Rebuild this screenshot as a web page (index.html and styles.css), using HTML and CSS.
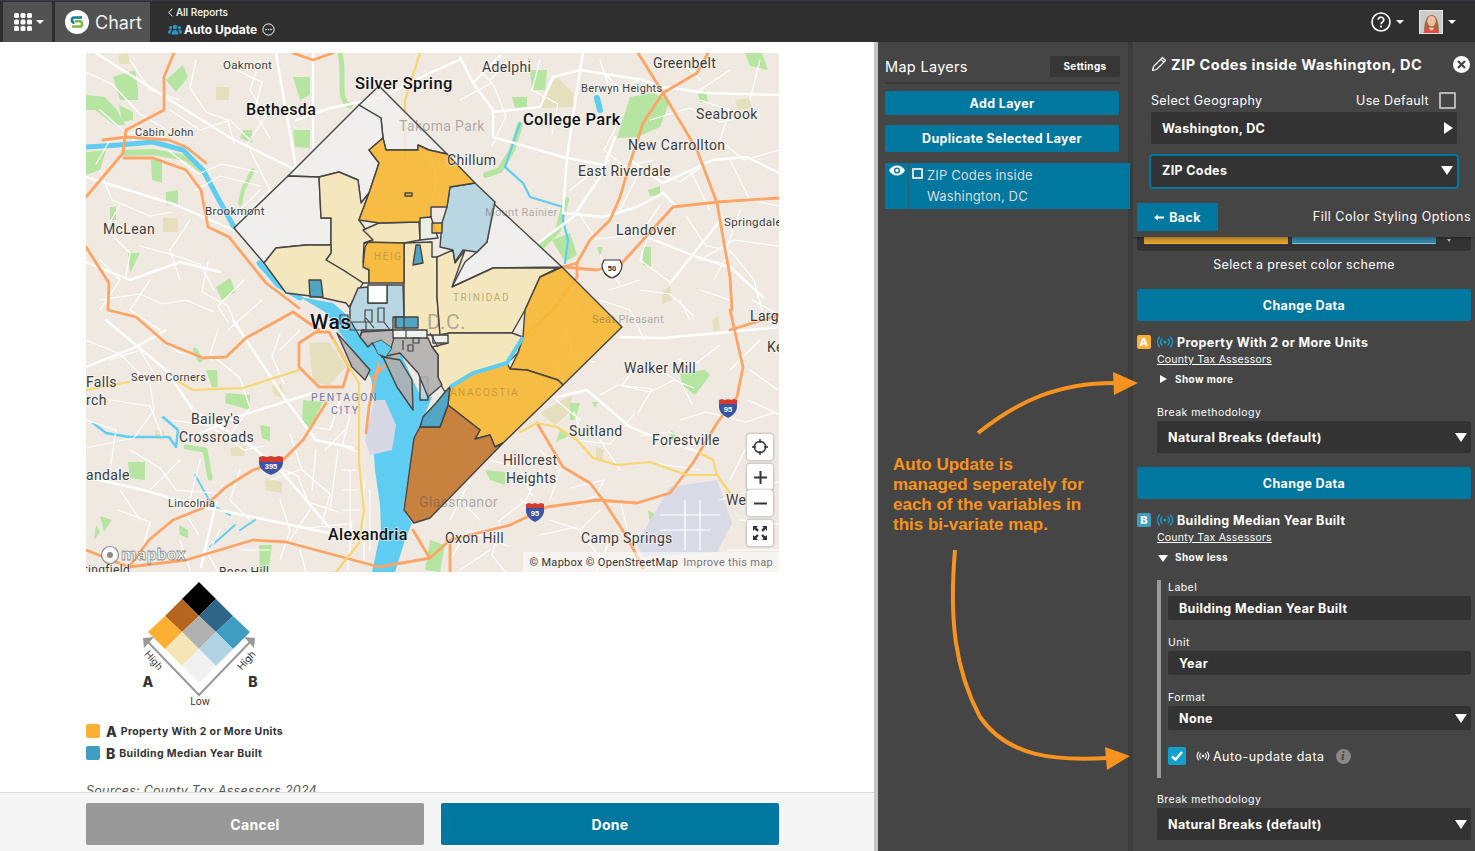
FILE: index.html
```html
<!DOCTYPE html>
<html lang="en">
<head>
    <meta charset="UTF-8">
    <meta name="viewport" content="width=device-width, initial-scale=1.0">
    <title>Chart - Auto Update</title>
    <link rel="stylesheet" href="styles.css">
</head>
<body>
    <svg class="defs" width="0" height="0">
        <symbol id="signal" viewBox="0 0 18 12">
            <circle cx="9" cy="6" r="1.6" fill="currentColor"/>
            <path d="M6 3a4 4 0 0 0 0 6M12 3a4 4 0 0 1 0 6M3.4 1a8 8 0 0 0 0 10M14.6 1a8 8 0 0 1 0 10" fill="none" stroke="currentColor" stroke-width="1.4" stroke-linecap="round"/>
        </symbol>
    </svg>

    <!-- top bar -->
    <header class="topbar">
        <div class="app-btn">
            <svg width="20" height="20" viewBox="0 0 20 20" fill="#fff">
                <rect x="1" y="1" width="5" height="5" rx="1.6"/><rect x="7.5" y="1" width="5" height="5" rx="1.6"/><rect x="14" y="1" width="5" height="5" rx="1.6"/>
                <rect x="1" y="7.5" width="5" height="5" rx="1.6"/><rect x="7.5" y="7.5" width="5" height="5" rx="1.6"/><rect x="14" y="7.5" width="5" height="5" rx="1.6"/>
                <rect x="1" y="14" width="5" height="5" rx="1.6"/><rect x="7.5" y="14" width="5" height="5" rx="1.6"/><rect x="14" y="14" width="5" height="5" rx="1.6"/>
            </svg>
            <span class="caret"></span>
        </div>
        <div class="chart-btn">
            <svg width="24" height="24" viewBox="0 0 24 24">
                <circle cx="12" cy="12" r="12" fill="#fff"/>
                <path d="M17 7.5H9.5a2.6 2.6 0 0 0 0 5.2" fill="none" stroke="#0f7f93" stroke-width="2.6"/>
                <path d="M7 16.5h7.5a2.6 2.6 0 0 0 0-5.2H10" fill="none" stroke="#7cb942" stroke-width="2.6"/>
            </svg>
            <span>Chart</span>
        </div>
        <div class="report-title">
            <div class="back-link">
                <svg width="5" height="9" viewBox="0 0 5 9"><path d="M4.3.7.8 4.5l3.5 3.8" fill="none" stroke="#fff" stroke-width="1"/></svg>
                All Reports
            </div>
            <div class="report-name">
                <svg width="14" height="11" viewBox="0 0 14 11" fill="#2b97c4">
                    <circle cx="7" cy="3" r="2.2"/><circle cx="2.6" cy="3.6" r="1.6"/><circle cx="11.4" cy="3.6" r="1.6"/>
                    <path d="M3.6 10.5c0-3 1.4-4.6 3.4-4.6s3.4 1.6 3.4 4.6zM0 9.5c0-2.4.9-4 2.6-4 .5 0 .9.1 1.2.4-.8.9-1.2 2-1.3 3.6zM14 9.5c0-2.4-.9-4-2.6-4-.5 0-.9.1-1.2.4.8.9 1.2 2 1.3 3.6z"/>
                </svg>
                <b>Auto Update</b>
                <svg width="13" height="13" viewBox="0 0 13 13"><circle cx="6.5" cy="6.5" r="5.6" fill="none" stroke="#fff" stroke-width="1"/><circle cx="4" cy="6.5" r=".8" fill="#fff"/><circle cx="6.5" cy="6.5" r=".8" fill="#fff"/><circle cx="9" cy="6.5" r=".8" fill="#fff"/></svg>
            </div>
        </div>
        <div class="top-right">
            <svg width="20" height="20" viewBox="0 0 20 20">
                <circle cx="10" cy="10" r="9" fill="none" stroke="#fff" stroke-width="1.6"/>
                <path d="M7.2 7.8a2.8 2.6 0 1 1 4.4 2.1c-1 .7-1.6 1.1-1.6 2.3" fill="none" stroke="#fff" stroke-width="1.7"/>
                <circle cx="10" cy="14.6" r="1.1" fill="#fff"/>
            </svg>
            <span class="caret small"></span>
            <svg class="avatar" width="24" height="24" viewBox="0 0 24 24">
                <rect width="24" height="24" fill="#c9ccc8"/>
                <path d="M5 24c0-8 1-18 7-19s8 8 8 19z" fill="#a5683c"/>
                <ellipse cx="12.5" cy="11" rx="4.2" ry="5.2" fill="#eebfa5"/>
                <path d="M4 24c1-4 4-6 8-6s7 2 9 6z" fill="#e5484d"/>
                <path d="M9.5 17.5h6l-2 3h-2z" fill="#eebfa5"/>
                <rect x=".5" y=".5" width="23" height="23" fill="none" stroke="#e6e6e6"/>
            </svg>
            <span class="caret small"></span>
        </div>
    </header>

    <main class="workspace">
        <!-- left: map preview -->
        <section class="preview">
            <div class="preview-scroll">
                <div class="map">
                    <svg class="map-art" viewBox="86 53 693 519" width="693" height="519">
                        <rect x="86" y="53" width="693" height="519" fill="#efe9e2"/>
                        <!-- tan areas -->
                        <g fill="#e6dfbd">
                            <polygon points="216,87 229,87 229,100 216,100"/>
                            <polygon points="163,218 178,218 178,232 163,232"/>
                            <polygon points="540,100 557,77 573,93 573,107 540,108"/>
                            <polygon points="540,413 572,395 570,412 555,425"/>
                            <polygon points="309,343 329,342 346,367 329,385 313,382"/>
                            <polygon points="265,478 282,482 282,493 266,490"/>
                            <polygon points="272,386 282,384 284,398 274,396"/>
                            <polygon points="230,448 246,446 244,456 232,456"/>
                            <polygon points="118,55 128,53 130,64 120,64"/>
                            <polygon points="662,292 670,286 672,300 662,304"/>
                            <polygon points="155,430 165,432 162,440 155,438"/>
                            <polygon points="712,320 718,316 720,330 714,332"/>
                            <polygon points="665,225 672,222 674,232 667,234"/>
                            <polygon points="735,100 750,98 752,108 738,110"/>
                            <polygon points="596,447 604,450 602,460 596,458"/>
                        </g>
                        <!-- parks -->
                        <g fill="#b6e5a2">
                            <polygon points="113,77 135,70 138,90 138,100 120,100"/>
                            <polygon points="166,80 183,65 188,77 176,92"/>
                            <polygon points="86,95 105,97 117,110 125,125 115,125 95,110 86,110"/>
                            <polygon points="119,105 133,112 133,120 122,122"/>
                            <polygon points="86,152 106,150 100,170 86,175"/>
                            <polygon points="293,77 310,77 310,95 300,100"/>
                            <polygon points="293,130 310,130 310,148 295,147"/>
                            <polygon points="151,160 162,160 162,183 152,180"/>
                            <polygon points="166,192 178,190 178,206 166,205"/>
                            <polygon points="110,207 116,207 116,220 110,220"/>
                            <polygon points="128,253 140,253 130,273"/>
                            <polygon points="216,287 230,278 236,292 222,300"/>
                            <polygon points="243,130 252,130 252,143 240,138"/>
                            <polygon points="617,138 630,97 653,93 670,100 660,127 637,137"/>
                            <polygon points="512,97 527,97 527,107 515,108"/>
                            <polygon points="530,70 547,70 545,90 532,90"/>
                            <polygon points="552,240 570,233 577,255 565,262"/>
                            <polygon points="643,247 651,247 651,267 643,265"/>
                            <polygon points="597,247 603,247 600,257"/>
                            <polygon points="680,373 705,370 710,375 695,395 682,385"/>
                            <polygon points="570,403 580,403 575,420 570,420"/>
                            <polygon points="592,402 598,402 595,408"/>
                            <polygon points="485,470 505,472 505,485 490,480"/>
                            <polygon points="206,370 217,370 218,387 212,387"/>
                            <polygon points="226,393 250,395 250,410 225,403"/>
                            <polygon points="303,400 323,402 310,430 302,420"/>
                            <polygon points="260,425 270,427 270,441 262,438"/>
                            <polygon points="128,462 145,462 145,480 130,478"/>
                            <polygon points="179,525 188,530 188,538 180,535"/>
                            <polygon points="259,545 272,545 268,572 260,572"/>
                            <polygon points="745,53 762,53 768,70 750,66"/>
                            <polygon points="100,516 112,520 104,532"/>
                            <polygon points="96,525 100,532 94,540"/>
                            <polygon points="430,540 445,545 440,572 425,570"/>
                            <polygon points="648,510 656,515 650,522"/>
                            <polygon points="560,430 568,436 556,442"/>
                            <polygon points="648,190 660,186 660,196 650,196"/>
                            <polygon points="698,94 706,90 708,102 700,102"/>
                            <polygon points="670,430 680,436 672,440"/>
                        </g>
                        <g fill="none" stroke="#b6e5a2" stroke-linecap="round" stroke-linejoin="round">
                            <path d="M340 53 C346 80 336 98 350 106" stroke-width="5"/>
                            <path d="M253 170 L243 190 L240 204" stroke-width="4"/>
                            <path d="M124 153 L153 152 L186 158 L204 172" stroke-width="6"/>
                            <path d="M186 447 L205 450 L210 478" stroke-width="5"/>
                            <path d="M520 125 L512 150 L500 170 L486 175 M566 200 L558 230 L542 246" stroke-width="6"/>
                            <path d="M195 350 L200 360" stroke-width="5"/>
                        </g>
                        <!-- water -->
                        <g fill="none" stroke="#5fcdf1" stroke-linecap="round" stroke-linejoin="round">
                            <path d="M86 147 L119 145 L153 142 L183 150 L203 170 L219 200 L234 227" stroke-width="5"/>
                            <path d="M259 263 L278 285 L300 298" stroke-width="5"/>
                            <path d="M93 423 L106 433 L129 437 L169 437 L176 447 L178 430 L163 417" stroke-width="2.4"/>
                            <path d="M520 123 L505 167 L523 183 L530 197 L563 207 L563 220 L568 240 L565 263" stroke-width="2.2"/>
                            <path d="M597 98 L600 110" stroke-width="6"/>
                            <path d="M195 475 L212 505 L230 515 M235 525 L210 547 M240 530 L255 520" stroke-width="1.8"/>
                        </g>
                        <polygon points="300,297 333,303 350,318 360,338 400,352 420,395 432,397 420,427 414,438 403,510 412,523 405,540 395,572 372,572 381,530 380,505 375,470 373,440 375,402 371,378 345,340 325,312" fill="#5fcdf1"/>
                        <polygon points="374,400 385,400 396,425 392,450 370,455 365,440" fill="#d6d8e6"/>
                        <polygon points="637,543 670,487 717,480 732,523 717,552 643,557" fill="#d8dae6"/>
                        <!-- streets -->
                        <g fill="none" stroke="#fff" stroke-width="1.2" stroke-linejoin="round" stroke-linecap="round">
                            <path d="M86 72l26 12 28 30 34 20M196 60l-6 28 16 24 22 8 6 24M236 70l26 12-8 30 16 26M168 150l30 24 24-10 36 8M100 170l12 30 38 16 22-4M120 205l-14 24 24 24-4 24M140 246l30 8 30 10 14 26M208 262l-6 30 26 14 8 20M244 280l-26 26 10 16M100 300l40-6 22 10 24-4 28 12M86 340l34 14 30 30 4 26-20 28-48 10M150 330l28 22 34 8M218 330l-8 24 30 24 10 30-18 24M280 334l-8 22 12 28M172 420l38 6 34 24 20-4M130 450l30 18 16 22 50 4M200 460l-6 24-8 30 12 20M250 444l20 20 28 12 10 26 30 10M290 434l12 36 28 24-8 30M316 450l-4 40M330 406l20 10-8 30 16 6M270 520l36 8 42-4M118 510l32 12-8 30M220 530l-12 24 10 18M300 550l6 22"/>
                            <path d="M342 470h14M342 490h16M342 510h18M342 530h16M338 450l-8 60M352 520l-4 50M350 470v80M364 480v80M370 490v60"/>
                            <path d="M480 70l14 16 12 30-14 30M540 60l-8 30 26 14-6 30M606 75l20 20M620 120l-16 30 20 16 30-6M610 160l-40 30M580 215l16 24 40-4M650 230l-10 30 30 22M686 216l20 30 24 4-16 30M700 260l34-20 44 6M730 250l24 30 8 30M650 172l30 10 28-20M650 120l40-12 30 14 40-8M700 100l30 10-10 30 24 20 35-10M586 292l-20 36 6 26 22 8M600 300l30 10 14 30M640 290l30 4 24 22M570 330l-18 30 12 22M640 360l-18 26 28 6 24-12 20 8M600 395l18-10 34 4-14 24M660 370l22 14 10 20M720 345l-26 20-16-6M544 390l36 30M574 412l8 24M634 414l-24 30-34-4M640 436l30-4 24 10M540 470l-14 30-28 22M490 460l30 8 12 28M570 488l34-8-8 16-24 8M500 525l-8 30 14 18M450 560l18-30 40 16M540 535l36-8 24 30M610 540l-14 32M680 420l26-8 40 10 30-10M748 400l30 14M752 300l26 14M720 500l58-18M740 520l38 4M728 550l50 0"/>
                            <path d="M130 60l20 30 30 10M170 110l30 20 30-10 20 20M260 60l-10 30 16 26-20 30M250 150l20 40-30 30M140 130l-30 10-14 24M100 110l34 30M196 190l24-14 40 10M190 220l-20 30 10 30M100 260l20 20-20 30M150 280l-20 30 30 20M260 190l-20 20M262 300l-34 30M300 330l-20 20M110 360l30-10 20 34M110 400l40 6 12 30M86 420l30 10-6 40M180 460l-30 30M120 490l20 30M240 470l-10 30 20 20M280 500l10 30-10 30M180 540l10 30M240 550l30 0M300 470l-30 10M310 510l-20 30M340 400l-10 30-20-4M345 430l-20 20"/>
                            <path d="M460 100l30-16M510 60l-20 20M600 60l10 30 30-10M680 60l20 20M730 70l-30 20M760 60l-10 40M640 170l-20 40M660 205l-20 30M690 170l20 40M730 160l20 40 28 6M740 210l-14 40M600 255l20 30M610 290l30-10M700 290l30 10M690 320l-10-20M760 340l-30 30M750 370l28 20M750 440l-20 40M700 470l-40-6M620 470l-20-30M540 450l20 20-10 30M600 510l-20 20-30-10M620 500l10 40M470 480l-20 40M460 500l20 20M520 500l20 10M490 550l-30 20M700 500v50M685 500v50M660 530h50M660 515h60"/>
                        </g>
                        <g fill="none" stroke="#fff" stroke-width="2.4" stroke-linejoin="round" stroke-linecap="round">
                            <path d="M96 53 L159 93 L229 137 L296 170"/>
                            <path d="M86 177 L176 205 L233 230"/>
                            <path d="M276 53 L284 100 L296 167"/>
                            <path d="M313 53 L313 147"/>
                            <path d="M296 120 L330 108 L380 98 L430 73 L459 60"/>
                            <path d="M493 112 L540 107 L553 77 L580 70 L643 80 L663 87 L707 93 L779 95"/>
                            <path d="M493 112 L493 137 L563 157 L603 165"/>
                            <path d="M460 57 L473 83 L493 110"/>
                            <path d="M583 53 L580 70 L567 157 L563 213"/>
                            <path d="M615 137 L600 177 L573 217 L533 247"/>
                            <path d="M563 213 L603 217 L637 207 L663 193 L677 207"/>
                            <path d="M630 160 L663 183 L713 160 L747 157 L779 173"/>
                            <path d="M647 237 L697 257 L730 267 L763 297"/>
                            <path d="M670 283 L723 217"/>
                            <path d="M557 397 L587 390 L630 427 L670 443 L703 453"/>
                            <path d="M620 337 L663 338 L730 332 L779 327"/>
                            <path d="M233 320 L286 400 L316 440 L353 448"/>
                            <path d="M186 440 L236 417 L313 393"/>
                            <path d="M86 477 L143 490 L203 507 L253 517 L329 533"/>
                            <path d="M106 320 L166 370 L193 410 L253 447 L283 473 L329 527"/>
                            <path d="M86 367 L136 347 L166 330"/>
                            <path d="M216 503 L208 537 L201 567"/>
                            <path d="M473 83 L500 56"/>
                            <path d="M429 150 L437 180 L430 210"/>
                            <path d="M86 262 L130 280 L180 262 L220 272"/>
                        </g>
                        <!-- highways -->
                        <g fill="none" stroke="#fca566" stroke-width="2.8" stroke-linejoin="round" stroke-linecap="round">
                            <path d="M174 53 L164 77 L164 110 L126 130 L123 153 L86 197"/>
                            <path d="M103 140 L126 137 L169 140 L186 147 L206 163"/>
                            <path d="M124 158 L153 158 L186 170 L201 190 L208 227 L229 237 L266 283 L299 308"/>
                            <path d="M293 53 L313 60 L333 53"/>
                            <path d="M86 247 L109 283 L108 310 L136 317 L166 343 L203 358 L226 357 L246 338 L293 312 L319 330"/>
                            <path d="M316 332 L299 343 L299 367 L319 387 L343 387 L349 367 L329 332 Z"/>
                            <path d="M326 403 L303 440 L283 460 L253 470 L226 487 L203 508 L173 520 L149 540 L129 567"/>
                            <path d="M86 550 L129 567 L186 560 L253 540 L286 542 L353 560 L379 567 L419 560 L430 558 L450 540 L510 525 L527 517 L547 507 L597 500 L637 503 L670 493 L693 463 L717 423 L737 397 L743 367 L730 310"/>
                            <path d="M638 53 L663 93 L697 150 L717 203 L730 277 L732 310"/>
                            <path d="M708 53 L697 73 L663 93 L643 123 L630 163 L620 197 L610 220 L590 240 L577 263 L563 267"/>
                            <path d="M577 263 L577 277 L553 310 L523 337"/>
                            <path d="M563 267 L597 270 L622 263 L643 240 L673 207 L717 202 L779 198"/>
                            <path d="M537 423 L563 467 L590 483 L603 500 L627 537 L643 568"/>
                            <path d="M379 363 L369 407 L366 433"/>
                            <path d="M399 353 L373 377"/>
                            <path d="M413 530 L429 557"/>
                            <path d="M450 540 L450 572"/>
                            <path d="M730 330 L779 315"/>
                        </g>
                        <g fill="none" stroke="#f9d56e" stroke-width="2.2" stroke-linejoin="round" stroke-linecap="round">
                            <path d="M520 432 L537 423 L557 427 L577 440 L593 458 L617 465 L650 462 L687 475 L717 475 L713 460 L700 453"/>
                            <path d="M717 475 L730 493"/>
                            <path d="M86 390 L129 382"/>
                            <path d="M179 382 L193 390 L243 388 L299 370"/>
                            <path d="M333 340 L359 383 L359 463 L364 510 L359 543 L336 572"/>
                            <path d="M420 53 L405 100 L405 160"/>
                        </g>
                        <!-- choropleth -->
                        <g class="zips" stroke="#444" stroke-width="1.4" stroke-linejoin="round">
                            <polygon class="pale" fill="#f1f1f1" points="379,86 447,154 429,150 418,145 418,150 386,150 383,138 381,118 359,105"/>
                            <polygon class="pale" fill="#f1f1f1" points="359,105 381,118 383,138 369,150 379,163 369,193 361,203 358,180 339,172 319,177 288,176"/>
                            <polygon class="pale" fill="#f1f1f1" points="288,176 319,177 321,218 331,218 331,245 306,245 276,248 264,263 234,228"/>
                            <polygon class="pale" fill="#f1f1f1" points="452,287 465,262 477,252 487,242 493,203 562,267 493,268"/>
                            <polygon fill="#f5e7b9" points="319,177 339,172 358,180 361,203 369,193 359,220 373,240 364,243 363,263 369,267 369,283 363,283 343,270 326,260 331,253 331,218 321,218"/>
                            <polygon fill="#f5e7b9" points="264,263 276,248 306,245 331,245 331,253 326,260 343,270 363,283 349,307 346,303 319,297 286,293"/>
                            <polygon fill="#f5e7b9" points="363,230 379,223 419,222 420,240 404,243 364,243 373,240"/>
                            <polygon fill="#f5e7b9" points="404,243 432,242 432,257 437,257 437,297 440,333 440,343 432,335 404,335 404,283"/>
                            <polygon fill="#f5e7b9" points="437,257 453,250 455,263 465,250 452,287 493,268 558,268 540,277 525,310 512,333 450,333 440,335 437,297"/>
                            <polygon fill="#f5e7b9" points="440,335 450,333 512,333 523,337 518,353 507,363 473,373 450,387 445,392 438,380 438,355 432,347 448,343"/>
                            <polygon fill="#b3d4e3" points="450,187 475,183 495,202 493,212 487,242 477,252 463,250 455,262 453,250 440,247 442,223 447,207"/>
                            <polygon fill="#b3d4e3" points="350,307 358,288 368,287 368,303 387,303 387,285 403,285 404,317 393,317 393,330 362,330 360,337 350,320"/>
                            <polygon fill="#b3d4e3" points="420,377 428,377 428,400 420,400"/>
                            <polygon fill="#f7b733" points="383,138 369,150 379,163 369,193 359,220 379,223 419,222 431,217 431,207 447,207 450,187 475,183 447,154 429,150 418,145 418,150 386,150"/>
                            <polygon fill="#f7b733" points="368,242 404,243 404,283 369,283 369,270 363,267 365,247"/>
                            <polygon fill="#f7b733" points="562,267 622,327 563,385 558,380 527,370 510,369 518,353 523,337 525,310 540,277"/>
                            <polygon fill="#f7b733" points="563,385 503,443 495,447 490,435 475,439 480,430 448,405 450,387 473,373 507,363 510,369 527,370 558,380"/>
                            <polygon class="solid" fill="#fff" points="368,285 387,285 387,303 368,303"/>
                            <polygon fill="#c2772f" points="420,427 440,427 448,405 480,430 475,439 490,435 495,447 503,443 430,518 414,523 404,510 414,438"/>
                            <polygon fill="#3f9dc2" points="420,427 423,417 436,403 445,392 450,387 448,405 440,427"/>
                            <polygon fill="#3f9dc2" points="395,317 418,317 418,328 395,328"/>
                            <polygon fill="#3f9dc2" points="309,280 321,280 323,297 310,297"/>
                            <polygon fill="#3f9dc2" points="416,245 420,245 423,263 413,265"/>
                            <polygon fill="#b0b0b0" points="362,332 393,330 428,338 432,347 438,355 438,377 442,385 428,397 418,373 400,353 382,357 372,343 368,347 360,337"/>
                            <polygon fill="#b0b0b0" points="337,333 370,370 365,380 352,367"/>
                            <polygon fill="#b0b0b0" points="383,357 400,360 412,380 413,410 397,387"/>
                            <polygon class="solid" fill="#e9f1e6" points="420,218 431,217 438,238 420,240"/>
                            <polygon class="solid" fill="#eef2ee" points="393,330 427,330 427,338 393,338"/>
                            <polygon class="solid" fill="#eef2ee" points="433,335 448,335 448,343 433,343"/>
                            <polygon fill="#f7b733" points="432,223 442,223 442,233 432,233"/>
                            <polygon fill="#f7b733" points="405,193 412,193 412,196 405,196"/>
                        </g>
                        <path d="M450 387 L473 373 L507 363 L523 337" fill="none" stroke="#5fcdf1" stroke-width="4"/>
                        <polygon points="373,343 381,340 392,348 386,357 378,354" fill="#5fcdf1" stroke="#444" stroke-width=".8"/>
                        <g fill="none" stroke="#444" stroke-width="1.2">
                            <path d="M365 310h7v12h-7zM378 308h6v14h-6zM350 322h16v8h-16zM366 318l8 10M384 322l6 8M406 330v8M413 338h6v5h-6zM394 338l-3 10M408 345h5v6h-5zM430 333l8 14M403 350v-10"/>
                            <path d="M340 315h8v9h-8zM396 317v11M404 317v11"/>
                        </g>
                        <!-- labels -->
                        <g class="lbl faded">
                            <text x="399" y="131" font-size="14">Takoma Park</text>
                            <text x="485" y="216" font-size="11">Mount Rainier</text>
                            <text x="592" y="323" font-size="11">Seat Pleasant</text>
                            <text x="419" y="507" font-size="14">Glassmanor</text>
                            <text x="427" y="329" font-size="21">D.C.</text>
                        </g>
                        <g class="lbl">
                            <text x="223" y="69" font-size="11.5">Oakmont</text>
                            <text x="355" y="89" font-size="16.5" class="strong">Silver Spring</text>
                            <text x="482" y="72" font-size="14">Adelphi</text>
                            <text x="653" y="68" font-size="14">Greenbelt</text>
                            <text x="581" y="92" font-size="11">Berwyn Heights</text>
                            <text x="246" y="115" font-size="16" class="strong">Bethesda</text>
                            <text x="523" y="125" font-size="16.5" class="strong">College Park</text>
                            <text x="696" y="119" font-size="14">Seabrook</text>
                            <text x="135" y="136" font-size="11">Cabin John</text>
                            <text x="628" y="150" font-size="14">New Carrollton</text>
                            <text x="447" y="165" font-size="14">Chillum</text>
                            <text x="578" y="176" font-size="14">East Riverdale</text>
                            <text x="205" y="215" font-size="11.5">Brookmont</text>
                            <text x="103" y="234" font-size="14">McLean</text>
                            <text x="616" y="235" font-size="14">Landover</text>
                            <text x="724" y="226" font-size="11.5">Springdale</text>
                            <text x="750" y="321" font-size="14">Largo</text>
                            <text x="767" y="352" font-size="14">Ke</text>
                            <text x="310" y="329" font-size="21" class="strong">Was</text>
                            <text x="86" y="387" font-size="14">Falls</text>
                            <text x="86" y="405" font-size="14">rch</text>
                            <text x="131" y="381" font-size="11">Seven Corners</text>
                            <text x="624" y="373" font-size="14">Walker Mill</text>
                            <text x="191" y="424" font-size="14">Bailey's</text>
                            <text x="179" y="442" font-size="14">Crossroads</text>
                            <text x="569" y="436" font-size="14">Suitland</text>
                            <text x="652" y="445" font-size="14">Forestville</text>
                            <text x="503" y="465" font-size="14">Hillcrest</text>
                            <text x="506" y="483" font-size="14">Heights</text>
                            <text x="86" y="480" font-size="14">andale</text>
                            <text x="168" y="507" font-size="11">Lincolnia</text>
                            <text x="726" y="505" font-size="14">West</text>
                            <text x="328" y="540" font-size="16" class="strong">Alexandria</text>
                            <text x="445" y="543" font-size="14">Oxon Hill</text>
                            <text x="581" y="543" font-size="14">Camp Springs</text>
                            <text x="69" y="574" font-size="12">Springfield</text>
                            <text x="219" y="576" font-size="12">Rose Hill</text>
                        </g>
                        <g class="lbl dist">
                            <text x="311" y="401" font-size="10.5" class="pentagon">PENTAGON</text>
                            <text x="331" y="414" font-size="10.5" class="pentagon">CITY</text>
                            <text x="453" y="301" font-size="10" class="on-cream">TRINIDAD</text>
                            <text x="450" y="396" font-size="10" class="on-orange">ANACOSTIA</text>
                            <text x="374" y="260" font-size="10" class="on-orange">HEIG</text>
                        </g>
                        <!-- shields -->
                        <g class="shield">
                            <path d="M604 260h16l2 5c0 5-3 11-10 13-7-2-10-8-10-13z" fill="#fff" stroke="#333" stroke-width="1.2"/>
                            <text x="612" y="271" font-size="7.5">50</text>
                            <path d="M259 459h24v4c0 5-6 10-12 12-6-2-12-7-12-12z" fill="#3b55a5"/><path d="M259 457l4-1 4 1 4-1 4 1 4-1 4 1v5h-24z" fill="#d13a2f"/>
                            <text x="271" y="469" font-size="7.5" class="light">395</text>
                            <path d="M719 403h18v4c0 4-4 9-9 11-5-2-9-7-9-11z" fill="#3b55a5"/><path d="M719 400l3-1 3 1 3-1 3 1 3-1 3 1v4h-18z" fill="#d13a2f"/>
                            <text x="728" y="412" font-size="7.5" class="light">95</text>
                            <path d="M526 507h18v4c0 4-4 9-9 11-5-2-9-7-9-11z" fill="#3b55a5"/><path d="M526 504l3-1 3 1 3-1 3 1 3-1 3 1v4h-18z" fill="#d13a2f"/>
                            <text x="535" y="516" font-size="7.5" class="light">95</text>
                        </g>
                        <!-- mapbox mark -->
                        <circle cx="110" cy="555" r="8.5" fill="#fff" fill-opacity=".85" stroke="#8c8c8c" stroke-width="1.2"/>
                        <circle cx="110" cy="555" r="3" fill="#8c8c8c"/>
                        <text x="121" y="560" class="mapbox-mark">mapbox</text>
                    </svg>
                    <div class="map-controls">
                        <button class="ctrl">
                            <svg width="16" height="16" viewBox="0 0 16 16"><circle cx="8" cy="8" r="5.6" fill="none" stroke="#333" stroke-width="1.5"/><path d="M8 0v4M8 12v4M0 8h4M12 8h4" stroke="#333" stroke-width="1.5"/></svg>
                        </button>
                        <div class="ctrl-group">
                            <button class="ctrl">
                                <svg width="15" height="15" viewBox="0 0 15 15"><path d="M7.5 1v13M1 7.5h13" stroke="#333" stroke-width="2"/></svg>
                            </button>
                            <button class="ctrl">
                                <svg width="15" height="15" viewBox="0 0 15 15"><path d="M1 7.5h13" stroke="#333" stroke-width="2"/></svg>
                            </button>
                        </div>
                        <button class="ctrl">
                            <svg width="16" height="16" viewBox="0 0 16 16" fill="#333"><path d="M1 1h5L4.4 2.6l2.4 2.500-1.600 1.600-2.500-2.400L1 6zM15 1v5l-1.600-1.700-2.500 2.400-1.600-1.600 2.400-2.500L10 1zM1 15v-5l1.700 1.600 2.500-2.400 1.600 1.600-2.400 2.500L6 15zM15 15h-5l1.600-1.700-2.400-2.500 1.600-1.600 2.500 2.400L15 10z"/></svg>
                        </button>
                    </div>
                    <div class="attribution">
                        <span>© Mapbox</span> <span>© OpenStreetMap</span> <span class="improve">Improve this map</span>
                    </div>
                </div>

                <svg class="legend-key" viewBox="130 578 140 130" width="140" height="130">
                    <polygon points="199,582 216,599 199,616 182,599" fill="#000"/>
                    <polygon points="182,599 199,616 182,632 165,616" fill="#b5651d"/>
                    <polygon points="216,599 233,616 216,632 199,616" fill="#2d6488"/>
                    <polygon points="165,616 182,632 165,649 148,632" fill="#fbb034"/>
                    <polygon points="199,616 216,632 199,649 182,632" fill="#b0b0b0"/>
                    <polygon points="233,616 250,632 233,649 216,632" fill="#3f9dc2"/>
                    <polygon points="182,632 199,649 182,666 165,649" fill="#f5e6b8"/>
                    <polygon points="216,632 233,649 216,666 199,649" fill="#b0d4e3"/>
                    <polygon points="199,649 216,666 199,683 182,666" fill="#f1f1f1"/>
                    <path d="M148 642l51 53 51-53" fill="none" stroke="#999" stroke-width="2"/>
                    <path d="M143 638l11-1-10 11zM255 638l-11-1 10 11z" fill="#999"/>
                    <text x="154" y="664" class="key-high" transform="rotate(48 154 660)">High</text>
                    <text x="246" y="664" class="key-high" transform="rotate(-48 246 660)">High</text>
                    <text x="148" y="687" class="key-letter">A</text>
                    <text x="253" y="687" class="key-letter">B</text>
                    <text x="200" y="705" class="key-low">Low</text>
                </svg>

                <div class="legend-rows">
                    <div class="legend-row">
                        <span class="swatch swatch-a"></span>
                        <b class="legend-letter">A</b>
                        <span class="legend-name">Property With 2 or More Units</span>
                    </div>
                    <div class="legend-row">
                        <span class="swatch swatch-b"></span>
                        <b class="legend-letter">B</b>
                        <span class="legend-name">Building Median Year Built</span>
                    </div>
                </div>
                <p class="sources">Sources: County Tax Assessors 2024</p>
            </div>
            <footer class="preview-actions">
                <button class="btn-cancel">Cancel</button>
                <button class="btn-done">Done</button>
            </footer>
        </section>

        <!-- middle: layer list -->
        <section class="layers">
            <div class="layers-head">
                <h2>Map Layers</h2>
                <button class="btn-settings">Settings</button>
            </div>
            <button class="btn-blue add-layer">Add Layer</button>
            <button class="btn-blue dup-layer">Duplicate Selected Layer</button>
            <div class="layer-row">
                <div class="layer-eye">
                    <svg width="16" height="11" viewBox="0 0 16 11"><path d="M0 5.5C2 2 4.8.5 8 .5s6 1.500 8 5c-2 3.500-4.800 5-8 5s-6-1.500-8-5z" fill="#fff"/><circle cx="8" cy="5.500" r="3.100" fill="#00779f"/><circle cx="8" cy="5.500" r="1.700" fill="#fff"/></svg>
                </div>
                <span class="layer-check"></span>
                <div class="layer-name">ZIP Codes inside<br>Washington, DC</div>
            </div>
        </section>

        <!-- right: layer settings -->
        <section class="settings">
            <div class="settings-head">
                <div class="title-row">
                    <svg width="16" height="16" viewBox="0 0 16 16"><path d="M1.500 14.500l1-4L11.500 1.500l3 3-9 9zM9.800 3.200l3 3" fill="none" stroke="#fff" stroke-width="1.200" stroke-linejoin="round"/></svg>
                    <h2>ZIP Codes inside Washington, DC</h2>
                    <span class="close">
                        <svg width="9" height="9" viewBox="0 0 9 9"><path d="M1 1l7 7M8 1L1 8" stroke="#454545" stroke-width="2.200"/></svg>
                    </span>
                </div>
                <div class="geo-row">
                    <span>Select Geography</span>
                    <span class="use-default">Use Default <i class="checkbox"></i></span>
                </div>
                <div class="select geo-select">Washington, DC <i class="tri-right"></i></div>
                <div class="select zip-select">ZIP Codes <i class="tri-down"></i></div>
                <div class="back-row">
                    <button class="btn-back">
                        <svg width="10" height="7" viewBox="0 0 10 7" fill="#fff"><path d="M0 3.500L4 .5v2h6v2H4v2z"/></svg>
                        Back
                    </button>
                    <span class="back-title">Fill Color Styling Options</span>
                </div>
            </div>

            <div class="settings-body">
                <div class="preset-strip">
                    <span class="preset preset-a"></span>
                    <span class="preset preset-b"></span>
                    <i class="preset-caret"></i>
                </div>
                <p class="preset-note">Select a preset color scheme</p>

                <button class="btn-blue wide change-a">Change Data</button>
                <div class="var-row">
                    <span class="badge badge-a">A</span>
                    <svg class="signal" width="18" height="12"><use href="#signal"/></svg>
                    <b>Property With 2 or More Units</b>
                </div>
                <a class="source-link">County Tax Assessors</a>
                <div class="toggle"><i class="tri-right mini"></i>Show more</div>
                <label class="field-label break-a">Break methodology</label>
                <div class="select indent">Natural Breaks (default) <i class="tri-down"></i></div>

                <button class="btn-blue wide change-b">Change Data</button>
                <div class="var-row">
                    <span class="badge badge-b">B</span>
                    <svg class="signal" width="18" height="12"><use href="#signal"/></svg>
                    <b>Building Median Year Built</b>
                </div>
                <a class="source-link">County Tax Assessors</a>
                <div class="toggle"><i class="tri-down mini"></i>Show less</div>

                <div class="details">
                    <label class="field-label">Label</label>
                    <div class="select small">Building Median Year Built</div>
                    <label class="field-label">Unit</label>
                    <div class="select small">Year</div>
                    <label class="field-label">Format</label>
                    <div class="select small">None <i class="tri-down"></i></div>
                    <div class="auto-row">
                        <span class="check-on">
                            <svg width="12" height="10" viewBox="0 0 12 10"><path d="M1 5.500l3.500 3L11 1" fill="none" stroke="#fff" stroke-width="2.400"/></svg>
                        </span>
                        <svg class="signal-white" width="14" height="10"><use href="#signal"/></svg>
                        <span class="auto-text">Auto-update data</span>
                        <span class="info">i</span>
                    </div>
                </div>

                <label class="field-label break-b">Break methodology</label>
                <div class="select indent">Natural Breaks (default) <i class="tri-down"></i></div>
            </div>
        </section>

        <!-- annotation drawn on top of the panels -->
        <svg class="callout" viewBox="878 42 597 809" width="597" height="809">
            <path d="M978 433c40-32 80-50 136-50" fill="none" stroke="#f7931e" stroke-width="4"/>
            <path d="M1138 383l-25-11 1 23z" fill="#f7931e"/>
            <path d="M955 550c-6 70 0 120 25 167 28 40 75 44 127 41" fill="none" stroke="#f7931e" stroke-width="4"/>
            <path d="M1130 756l-25-9 2 23z" fill="#f7931e"/>
            <text class="callout-text" x="893" y="470">Auto Update is</text>
            <text class="callout-text" x="893" y="490">managed seperately for</text>
            <text class="callout-text" x="893" y="510">each of the variables in</text>
            <text class="callout-text" x="893" y="530">this bi-variate map.</text>
        </svg>
    </main>
</body>
</html>
```

FILE: styles.css
```css
/* base */
* {
    box-sizing: border-box;
}

html, body {
    height: 100%;
}

body {
    margin: 0;
    overflow: hidden;
    font-family: Inter, "Open Sans", Arial, sans-serif;
    color: #fff;
    background: #454545;
}

button {
    font-family: inherit;
    letter-spacing: inherit;
    border: none;
    padding: 0;
    color: #fff;
    cursor: pointer;
}

h2 {
    margin: 0;
    font-weight: 700;
}

p {
    margin: 0;
}

.defs {
    position: absolute;
}

/* top bar */
.topbar {
    display: flex;
    align-items: stretch;
    height: 42px;
    background: #2f2f2f;
    border-top: 1px solid #3e3c4a;
    padding-top: 1px;
}

.app-btn {
    display: flex;
    align-items: center;
    gap: 3px;
    width: 49px;
    margin-left: 3px;
    padding-left: 10px;
    background: #525252;
}

.caret {
    width: 0;
    height: 0;
    border-left: 4px solid transparent;
    border-right: 4px solid transparent;
    border-top: 4px solid #fff;
}

.chart-btn {
    display: flex;
    align-items: center;
    gap: 6px;
    width: 95px;
    margin-left: 3px;
    padding-left: 10px;
    background: #525252;
    font-size: 18px;
    color: #f0f0f0;
}

.report-title {
    margin-left: 18px;
    padding-top: 3px;
}

.back-link {
    display: flex;
    align-items: center;
    gap: 3px;
    font-size: 10px;
    line-height: 14px;
    font-weight: 500;
}

.report-name {
    display: flex;
    align-items: center;
    gap: 2px;
    margin-top: 2px;
    font-size: 12px;
    line-height: 17px;
}

.report-name b {
    margin-right: 3px;
}

.top-right {
    display: flex;
    align-items: center;
    margin-left: auto;
    padding-right: 19px;
}

.caret.small {
    margin-left: 5px;
}

.avatar {
    margin-left: 15px;
}

/* workspace */
.workspace {
    position: relative;
    display: flex;
    height: 809px;
}

.preview {
    display: flex;
    flex-direction: column;
    width: 878px;
    flex: none;
    background: #fff;
    border-right: 4px solid #c4c4c4;
    color: #333;
}

.preview-scroll {
    flex: 1;
    min-height: 0;
    overflow: hidden;
    padding: 11px 0 0 86px;
}

/* map */
.map {
    position: relative;
    width: 693px;
    height: 519px;
    overflow: hidden;
}

.map-art {
    display: block;
}

.lbl text {
    font-family: Roboto, "Open Sans", sans-serif;
    fill: #3a3a3a;
    stroke: #fff;
    stroke-width: 2px;
    stroke-opacity: .5;
    paint-order: stroke;
    letter-spacing: .35px;
}

.lbl .strong {
    fill: #111;
    font-weight: 500;
}

.lbl.faded text {
    fill: #555;
    fill-opacity: .45;
    stroke: none;
}

.lbl.dist text {
    stroke: none;
    letter-spacing: 1.6px;
}

.lbl.dist .pentagon {
    fill: #6f7ba5;
}

.lbl.dist .on-cream {
    fill: #b9ab76;
}

.lbl.dist .on-orange {
    fill: #c99b3c;
}

.zips polygon {
    fill-opacity: .9;
}

.zips .pale {
    fill-opacity: .72;
}

.zips .solid {
    fill-opacity: 1;
}

.shield text {
    font-family: "Liberation Sans", Arial, sans-serif;
    font-weight: 700;
    text-anchor: middle;
    fill: #222;
}

.shield .light {
    fill: #fff;
}

.mapbox-mark {
    font-family: "Open Sans", sans-serif;
    font-size: 16px;
    font-weight: 700;
    fill: #fff;
    fill-opacity: .9;
    stroke: #8a8a8a;
    stroke-width: .8px;
}

.map-controls {
    position: absolute;
    right: 6px;
    top: 381px;
    display: flex;
    flex-direction: column;
    gap: 4px;
}

.ctrl-group {
    display: flex;
    flex-direction: column;
}

.ctrl {
    display: flex;
    align-items: center;
    justify-content: center;
    width: 26px;
    height: 26px;
    background: #fff;
    border-radius: 3px;
    box-shadow: 0 0 0 1.5px rgba(0, 0, 0, .12);
}

.attribution {
    position: absolute;
    right: 0;
    bottom: 0;
    height: 20px;
    padding: 0 6px;
    background: rgba(255, 255, 255, .5);
    font-family: Roboto, sans-serif;
    font-size: 11px;
    line-height: 21px;
    letter-spacing: .3px;
    color: #333;
}

.improve {
    margin-left: 2px;
    color: #777;
}

/* legend */
.legend-key {
    display: block;
    margin: 6px 0 0 44px;
}

.key-high {
    font-size: 10px;
    fill: #333;
    text-anchor: middle;
}

.key-low {
    font-size: 10px;
    fill: #333;
    text-anchor: middle;
}

.key-letter {
    font-size: 14px;
    font-weight: 800;
    fill: #333;
    text-anchor: middle;
}

.legend-rows {
    margin-top: 16px;
}

.legend-row {
    display: flex;
    align-items: center;
    height: 14px;
    margin-bottom: 8px;
}

.swatch {
    width: 14px;
    height: 14px;
    border-radius: 2px;
}

.swatch-a {
    background: #fbb034;
}

.swatch-b {
    background: #3f9dc2;
}

.legend-letter {
    margin-left: 6px;
    font-size: 14px;
    font-weight: 800;
}

.legend-name {
    margin-left: 4px;
    font-size: 10.5px;
    font-weight: 700;
    letter-spacing: .35px;
}

.sources {
    margin-top: 23px;
    font-size: 12.5px;
    font-style: italic;
    letter-spacing: .25px;
    color: #555;
}

.preview-actions {
    flex: none;
    display: flex;
    gap: 17px;
    height: 59px;
    padding: 10px 0 0 86px;
    background: #f5f5f5;
    border-top: 1px solid #ddd;
}

.preview-actions button {
    width: 338px;
    height: 42px;
    border-radius: 2px;
    font-size: 14px;
    font-weight: 700;
    letter-spacing: .3px;
}

.btn-cancel {
    background: #999;
}

.btn-done {
    background: #00779f;
}

/* layer list */
.layers {
    position: relative;
    z-index: 2;
    flex: none;
    width: 250px;
    padding: 14px 0 0 7px;
    letter-spacing: .35px;
}

.layers-head {
    display: flex;
    align-items: center;
    justify-content: space-between;
    width: 235px;
    height: 28px;
    padding-bottom: 6px;
    border-bottom: 2px solid #383838;
    margin-bottom: 7px;
}

.layers-head h2 {
    font-size: 14.5px;
    font-weight: 400;
    letter-spacing: .3px;
}

.btn-settings {
    width: 70px;
    height: 21px;
    background: #363636;
    border-radius: 2px;
    font-size: 10px;
    font-weight: 700;
}

.btn-blue {
    display: block;
    background: #00779f;
    border-radius: 2px;
    font-size: 12.5px;
    font-weight: 700;
}

.add-layer {
    width: 234px;
    height: 24px;
}

.dup-layer {
    width: 234px;
    height: 27px;
    margin-top: 10px;
}

.layer-row {
    display: flex;
    align-items: flex-start;
    width: 245px;
    height: 46px;
    margin-top: 11px;
    background: #00779f;
}

.layer-eye {
    width: 24px;
    height: 46px;
    padding: 2px 0 0 4px;
    border-right: 1px solid #2b5f73;
}

.layer-eye svg {
    display: block;
}

.layer-check {
    width: 11px;
    height: 11px;
    margin: 5px 0 0 3px;
    border: 2px solid #ddd;
    border-radius: 1px;
}

.layer-name {
    margin: 2px 0 0 4px;
    font-size: 13px;
    line-height: 21px;
    letter-spacing: .15px;
    color: #dcdcdc;
}

/* settings panel */
.settings {
    flex: none;
    width: 347px;
    height: 809px;
    overflow: hidden;
    border-left: 5px solid #3c3c3c;
    letter-spacing: .35px;
}

.settings-head {
    position: relative;
    height: 195px;
    padding: 0 0 0 18px;
    box-shadow: 0 1px 3px rgba(0, 0, 0, .35);
    background: #454545;
    z-index: 1;
}

.title-row {
    display: flex;
    align-items: center;
    gap: 4px;
    height: 44px;
    margin-bottom: 2px;
}

.title-row svg {
    flex: none;
}

.title-row h2 {
    font-size: 14.5px;
    letter-spacing: .5px;
    white-space: nowrap;
}

.close {
    display: flex;
    align-items: center;
    justify-content: center;
    width: 17px;
    height: 17px;
    margin-left: auto;
    margin-right: 5px;
    background: #fff;
    border-radius: 50%;
}

.geo-row {
    display: flex;
    align-items: center;
    justify-content: space-between;
    width: 305px;
    height: 24px;
    font-size: 12.5px;
}

.use-default {
    display: flex;
    align-items: center;
    gap: 10px;
}

.checkbox {
    width: 17px;
    height: 17px;
    border: 2px solid #b5b5b5;
    border-radius: 1px;
}

.select {
    display: flex;
    align-items: center;
    justify-content: space-between;
    height: 32px;
    padding: 0 4px 0 11px;
    background: #333;
    border-radius: 2px;
    font-size: 12.5px;
    font-weight: 700;
}

.geo-select {
    width: 306px;
}

.zip-select {
    width: 310px;
    height: 35px;
    margin: 10px 0 0 -2px;
    padding-bottom: 2px;
    border: 2px solid #00779f;
    border-radius: 4px;
}

.tri-right {
    width: 0;
    height: 0;
    border-top: 6.5px solid transparent;
    border-bottom: 6.5px solid transparent;
    border-left: 9px solid #fff;
}

.tri-down {
    width: 0;
    height: 0;
    border-left: 6.5px solid transparent;
    border-right: 6.5px solid transparent;
    border-top: 9px solid #fff;
}

.tri-right.mini {
    border-top-width: 4.5px;
    border-bottom-width: 4.5px;
    border-left-width: 7px;
    margin: 0 8px 0 3px;
}

.tri-down.mini {
    border-left-width: 5px;
    border-right-width: 5px;
    border-top-width: 7px;
    margin: 2px 7px 0 1px;
}

.back-row {
    display: flex;
    align-items: center;
    justify-content: space-between;
    height: 28px;
    margin: 14px 4px 0 -14px;
    font-size: 12.5px;
}

.back-title {
    padding-bottom: 2px;
    letter-spacing: .5px;
}

.btn-back {
    display: flex;
    align-items: center;
    justify-content: center;
    gap: 5px;
    width: 81px;
    height: 28px;
    background: #00779f;
    font-size: 12.5px;
    font-weight: 700;
}

.settings-body {
    padding: 0 4px;
}

.preset-strip {
    position: relative;
    display: flex;
    gap: 4px;
    height: 14px;
    padding-left: 7px;
    background: #333;
    border-radius: 0 0 2px 2px;
}

.preset {
    width: 144px;
    height: 7px;
    border-radius: 0 0 1px 1px;
}

.preset-a {
    background: #d4982e;
    border-bottom: 1px solid #fbb034;
}

.preset-b {
    background: #36819f;
    border-bottom: 1px solid #7cc3de;
}

.preset-caret {
    position: absolute;
    right: 20px;
    top: 2px;
    border-left: 2.5px solid transparent;
    border-right: 2.5px solid transparent;
    border-top: 3px solid #bbb;
}

.preset-note {
    margin-top: 6px;
    height: 16px;
    text-align: center;
    font-size: 12.5px;
    line-height: 16px;
}

.btn-blue.wide {
    width: 334px;
    height: 32px;
}

.change-a {
    margin-top: 16px;
}

.change-b {
    margin-top: 14px;
}

.var-row {
    display: flex;
    align-items: center;
    height: 14px;
    margin-top: 14px;
    font-size: 12.5px;
}

.var-row b {
    margin-left: 3px;
}

.badge {
    display: flex;
    align-items: center;
    justify-content: center;
    width: 14px;
    height: 14px;
    border-radius: 2px;
    font-size: 11px;
    font-weight: 800;
}

.badge-a {
    background: #fbb034;
}

.badge-b {
    background: #3f9dc2;
}

.signal {
    margin-left: 5px;
    color: #12a0cf;
}

.signal-white {
    margin-left: 10px;
    color: #fff;
}

.source-link {
    display: block;
    margin: 4px 0 0 20px;
    height: 14px;
    font-size: 10.5px;
    line-height: 14px;
    letter-spacing: .2px;
    text-decoration: underline;
}

.toggle {
    display: flex;
    align-items: center;
    height: 14px;
    margin: 5px 0 0 20px;
    font-size: 10px;
    font-weight: 700;
    letter-spacing: .4px;
}

.field-label {
    display: block;
    height: 14px;
    font-size: 10.5px;
    line-height: 14px;
    letter-spacing: .45px;
}

.break-a {
    margin: 20px 0 1px 20px;
}

.break-b {
    margin: 15px 0 1px 20px;
}

.select.indent {
    width: 314px;
    margin-left: 20px;
}

.details {
    width: 314px;
    height: 198px;
    margin: 16px 0 0 20px;
    padding: 1px 0 0 7px;
    border-left: 4px solid #999;
}

.details .field-label {
    margin-bottom: 1px;
    margin-top: 16px;
}

.details .field-label:first-child {
    margin-top: 0;
}

.select.small {
    height: 24px;
    font-size: 12.5px;
}

.auto-row {
    display: flex;
    align-items: center;
    height: 18px;
    margin-top: 17px;
}

.check-on {
    display: flex;
    align-items: center;
    justify-content: center;
    width: 18px;
    height: 18px;
    background: #12a0cf;
    border-radius: 2px;
}

.auto-text {
    margin-left: 3px;
    font-size: 12.5px;
    letter-spacing: .5px;
}

.info {
    width: 15px;
    height: 15px;
    margin-left: 11px;
    background: #888;
    border-radius: 50%;
    font-family: "Liberation Serif", serif;
    font-size: 12px;
    font-style: italic;
    font-weight: 700;
    line-height: 15px;
    text-align: center;
    color: #454545;
}

/* annotation */
.callout {
    position: absolute;
    z-index: 3;
    left: 878px;
    top: 0;
    pointer-events: none;
}

.callout-text {
    font-family: "Liberation Sans", Arial, sans-serif;
    font-size: 17px;
    font-weight: 700;
    fill: #f7931e;
}
```
